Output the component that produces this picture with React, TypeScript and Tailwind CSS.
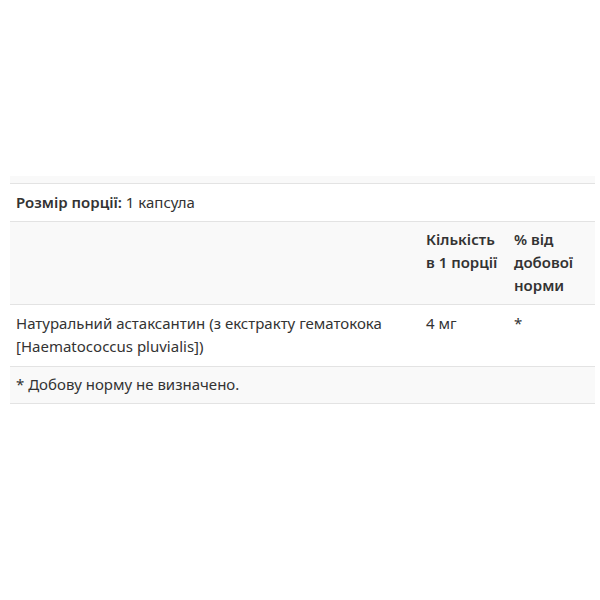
export default function App() {
  return (
    <div className="w-[600px] h-[600px] bg-white pt-[176px] px-[10px] font-['Noto_Sans',sans-serif] text-[15px] leading-[23px] text-[#333]">
      <div className="w-[585px]">
        <div className="h-[8px] bg-[#f9f9f9] border-b border-[#e3e3e3]" />
        <table className="w-full border-collapse">
          <tbody>
            <tr className="border-b border-[#e3e3e3] bg-white">
              <td colSpan={3} className="px-[6px] py-[7px]">
                <span className="font-semibold">Розмір порції:</span> 1 капсула
              </td>
            </tr>
            <tr className="border-b border-[#e3e3e3] bg-[#f9f9f9]">
              <td className="px-[6px] py-[6px] w-[410px]" />
              <td className="px-[6px] pt-[6px] pb-[7px] align-top font-semibold w-[88px]">
                Кількість в 1 порції
              </td>
              <td className="px-[6px] pt-[6px] pb-[7px] align-top font-semibold">
                % від добової норми
              </td>
            </tr>
            <tr className="border-b border-[#e3e3e3] bg-white">
              <td className="px-[6px] pt-[7px] pb-[8px] align-top">
                Натуральний астаксантин (з екстракту гематокока [Haematococcus pluvialis])
              </td>
              <td className="px-[6px] pt-[7px] pb-[8px] align-top">4 мг</td>
              <td className="px-[6px] pt-[7px] pb-[8px] align-top">*</td>
            </tr>
            <tr className="border-b border-[#e3e3e3] bg-[#f9f9f9]">
              <td colSpan={3} className="px-[6px] pt-[6px] pb-[7px]">
                * Добову норму не визначено.
              </td>
            </tr>
          </tbody>
        </table>
      </div>
    </div>
  );
}
